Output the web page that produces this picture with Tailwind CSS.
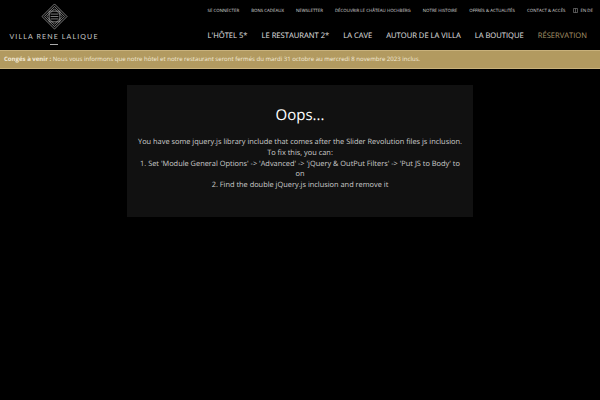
<!DOCTYPE html>
<html>
<head>
<meta charset="utf-8">
<script src="https://cdn.jsdelivr.net/npm/@tailwindcss/browser@4"></script>
</head>
<body class="w-[600px] h-[400px] overflow-hidden bg-black font-['Open_Sans',sans-serif] text-white [text-rendering:geometricPrecision]">
<header class="h-[50px] flex justify-between">
  <div class="w-[108px] flex flex-col items-center">
    <svg class="mt-[3px]" width="27" height="27" viewBox="0 0 28 28" fill="none" stroke="#9c9c9c" stroke-width="0.8">
      <path d="M14 1 27 14 14 27 1 14Z"/>
      <path d="M14 3.5 24.5 14 14 24.5 3.5 14Z"/>
      <path d="M8.5 8.5H19.5V19.5H8.5Z"/>
      <path d="M14 6 22 14 14 22 6 14Z"/>
      <path d="M10 11.500H18M10 14H18M10 16.500H18"/>
    </svg>
    <div class="mt-[2px] text-[7px] leading-[10px] tracking-[1.15px] text-[#c8c8c8] whitespace-nowrap font-['Lato',sans-serif]">VILLA RENE LALIQUE</div>
    <div class="mt-[2px] w-[8px] h-px bg-[#aaaaaa]"></div>
  </div>
  <nav class="flex flex-col items-end">
    <div class="flex items-center h-[21px] pt-[1px] pr-[7px] gap-[12px] text-[4.4px] text-[#d8d8d8] whitespace-nowrap">
      <span>SE CONNECTER</span><span>BONS CADEAUX</span><span>NEWSLETTER</span><span>DÉCOUVRIR LE CHÂTEAU HOCHBERG</span><span>NOTRE HISTOIRE</span><span>OFFRES &amp; ACTUALITÉS</span><span>CONTACT &amp; ACCÈS</span>
      <span class="flex items-center gap-[2px] -ml-[4px]"><svg width="5" height="5" viewBox="0 0 5 5" fill="none" stroke="#8a8a8a" stroke-width="0.6"><path d="M.5.5h4v4h-4zM2.500.5v4"/></svg>EN DE</span>
    </div>
    <div class="flex items-center h-[29px] pt-[2px] pr-[13px] gap-[14px] text-[7.6px] text-[#e4e4e4] whitespace-nowrap">
      <span>L'HÔTEL 5*</span><span>LE RESTAURANT 2*</span><span>LA CAVE</span><span>AUTOUR DE LA VILLA</span><span>LA BOUTIQUE</span><span class="text-[#a8966a]">RÉSERVATION</span>
    </div>
  </nav>
</header>
<div class="h-[19px] bg-[#b29a60] border-y border-[#c9b27c] flex items-center px-[4px] text-[6.05px] text-[#f2ead8] whitespace-nowrap">
  <b class="font-bold">Congés à venir :</b>&nbsp;Nous vous informons que notre hôtel et notre restaurant seront fermés du mardi 31 octobre au mercredi 8 novembre 2023 inclus.
</div>
<main class="flex justify-center pt-[16px]">
  <section class="w-[346px] h-[132px] bg-[#111111] flex flex-col items-center pt-[20px] text-center">
    <h1 class="text-[15px] leading-[20px] text-white">Oops...</h1>
    <p class="mt-[12px] w-[326px] text-[7.4px] leading-[10.75px] text-[#cccccc]">You have some jquery.js library include that comes after the Slider Revolution files js inclusion.<br>To fix this, you can:<br>1. Set 'Module General Options' -&gt; 'Advanced' -&gt; 'jQuery &amp; OutPut Filters' -&gt; 'Put JS to Body' to on<br>2. Find the double jQuery.js inclusion and remove it</p>
  </section>
</main>
</body>
</html>
